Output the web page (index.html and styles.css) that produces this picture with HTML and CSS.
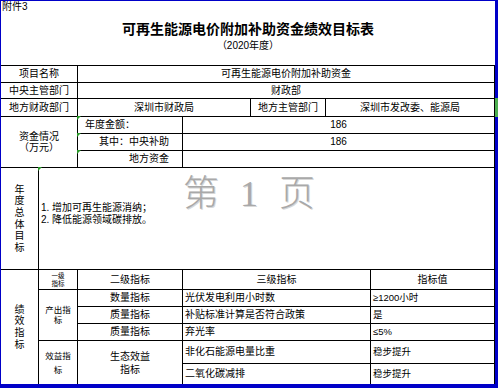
FILE: index.html
```html
<!DOCTYPE html>
<html lang="zh-CN">
<head>
<meta charset="utf-8">
<title>可再生能源电价附加补助资金绩效目标表</title>
<link rel="stylesheet" href="styles.css">
</head>
<body>
<div class="sheet">
  <div class="scroll-mark"></div>
  <header class="head">
    <div class="annex">附件3</div>
    <h1 class="title">可再生能源电价附加补助资金绩效目标表</h1>
    <div class="subtitle">（2020年度）</div>
  </header>
  <div class="grid">
    <div class="c c-1-3">项目名称</div>
    <div class="c c-3-8">可再生能源电价附加补助资金</div>

    <div class="c c-1-3">中央主管部门</div>
    <div class="c c-3-8">财政部</div>

    <div class="c c-1-3">地方财政部门</div>
    <div class="c c-3-5">深圳市财政局</div>
    <div class="c c-5-6">地方主管部门</div>
    <div class="c c-6-8">深圳市发改委、能源局</div>

    <div class="c c-1-3 span-3 fund">资金情况<br>（万元）</div>
    <div class="c c-3-4 note left-lbl">年度金额：</div>
    <div class="c c-4-8 num">186</div>
    <div class="c c-3-4 note right-lbl">其中：中央补助</div>
    <div class="c c-4-8 num">186</div>
    <div class="c c-3-4 note right-lbl">地方资金</div>
    <div class="c c-4-8"></div>

    <div class="c c-1-2"><span class="vert">年度总体目标</span></div>
    <div class="c c-2-8 note goals">
      <div class="goal-text">1. 增加可再生能源消纳；<br>2. 降低能源领域碳排放。</div>
      <div class="watermark"><span>第</span><span class="wm-num">1</span><span>页</span></div>
    </div>

    <div class="c c-1-2 span-6"><span class="vert">绩效指标</span></div>
    <div class="c c-2-3 tiny">一级<br>指标</div>
    <div class="c c-3-4">二级指标</div>
    <div class="c c-4-7">三级指标</div>
    <div class="c c-7-8">指标值</div>

    <div class="c c-2-3 span-3"><span class="wrap3 tight">产出指标</span></div>
    <div class="c c-3-4">数量指标</div>
    <div class="c c-4-7 start">光伏发电利用小时数</div>
    <div class="c c-7-8 start val">≥1200小时</div>

    <div class="c c-3-4">质量指标</div>
    <div class="c c-4-7 start">补贴标准计算是否符合政策</div>
    <div class="c c-7-8 start val">是</div>

    <div class="c c-3-4">质量指标</div>
    <div class="c c-4-7 start">弃光率</div>
    <div class="c c-7-8 start val">≤5%</div>

    <div class="c c-2-3 span-2"><span class="wrap3 loose">效益指标</span></div>
    <div class="c c-3-4 span-2 eco">生态效益<br>指标</div>
    <div class="c c-4-7 start">非化石能源电量比重</div>
    <div class="c c-7-8 start val">稳步提升</div>

    <div class="c c-4-7 start">二氧化碳减排</div>
    <div class="c c-7-8 start val">稳步提升</div>
  </div>
</div>
</body>
</html>
```
FILE: styles.css
```css
* { box-sizing: border-box; }

html, body {
  margin: 0;
  padding: 0;
  background: #ffffff;
}

body {
  font-family: "Liberation Sans", "Noto Sans CJK SC", sans-serif;
  font-size: 10px;
  color: #000000;
}

.sheet {
  position: relative;
  width: 498px;
  height: 388px;
  border-style: solid;
  border-color: #0000c8;
  border-width: 1px 3px 4px 1px;
  background: #ffffff;
  overflow: visible;
}

.scroll-mark {
  position: absolute;
  right: -3px;
  top: 97px;
  width: 3px;
  height: 19px;
  background: #4cae50;
}

.head {
  height: 64px;
  display: flex;
  flex-direction: column;
}

.annex {
  height: 12px;
  line-height: 12px;
  padding-left: 1px;
  font-size: 10px;
}

.title {
  margin: 7px 0 0 0;
  height: 18px;
  line-height: 18px;
  font-size: 14px;
  font-weight: 700;
  text-align: center;
}

.subtitle {
  margin-top: 2px;
  height: 12px;
  line-height: 12px;
  font-size: 10px;
  text-align: center;
}

.grid {
  display: grid;
  grid-template-columns: 37px 38px 104px 67px 74px 44px 123px;
  grid-template-rows: 16px 15px 17px 16px 16px 16px 101px 19px 16px 16px 16px 22px 20px;
  gap: 1px;
  padding: 1px 1px 0 0;
  background: #000000;
}

.c {
  position: relative;
  background: #ffffff;
  display: flex;
  align-items: center;
  justify-content: center;
  text-align: center;
  line-height: 12px;
  white-space: nowrap;
}

.c-1-2 { grid-column: 1 / 2; }
.c-1-3 { grid-column: 1 / 3; }
.c-2-3 { grid-column: 2 / 3; }
.c-2-8 { grid-column: 2 / 8; }
.c-3-4 { grid-column: 3 / 4; }
.c-3-5 { grid-column: 3 / 5; }
.c-3-8 { grid-column: 3 / 8; }
.c-4-7 { grid-column: 4 / 7; }
.c-4-8 { grid-column: 4 / 8; }
.c-5-6 { grid-column: 5 / 6; }
.c-6-8 { grid-column: 6 / 8; }
.c-7-8 { grid-column: 7 / 8; }

.span-2 { grid-row: span 2; }
.span-3 { grid-row: span 3; }
.span-6 { grid-row: span 6; }

.fund { line-height: 11.5px; }

.left-lbl {
  justify-content: flex-start;
  padding-left: 7px;
}

.right-lbl {
  justify-content: flex-end;
  padding-right: 13px;
}

.num {
  font-size: 10px;
}

.note::before {
  content: "";
  position: absolute;
  left: -1px;
  top: -1px;
  width: 0;
  height: 0;
  border-top: 4px solid #2a9a2a;
  border-right: 4px solid transparent;
  z-index: 2;
}

.vert {
  display: block;
  width: 10px;
  line-height: 11.6px;
  white-space: normal;
  word-break: break-all;
}

.goals {
  align-items: flex-start;
  justify-content: flex-start;
  text-align: left;
  padding: 34px 0 0 2px;
}

.goal-text {
  line-height: 11.5px;
}

.watermark {
  position: absolute;
  left: 144px;
  top: 8px;
  display: flex;
  gap: 21px;
  font-family: "Liberation Serif", "Noto Sans CJK SC", serif;
  font-size: 36px;
  font-weight: 300;
  line-height: 1;
  color: #a9a9a9;
  text-shadow: 1px 1px 0 #d8d8d8;
  pointer-events: none;
}

.wm-num { width: 18px; text-align: center; }

.tiny {
  font-size: 6.5px;
  line-height: 7.5px;
}

.wrap3 {
  display: block;
  width: 28px;
  white-space: normal;
  word-break: break-all;
  font-size: 8.5px;
}

.tight { line-height: 10px; }
.loose { line-height: 14px; }

.eco { line-height: 13px; }

.start {
  justify-content: flex-start;
  text-align: left;
  padding-left: 2px;
}

.val {
  font-size: 9.5px;
}
```
